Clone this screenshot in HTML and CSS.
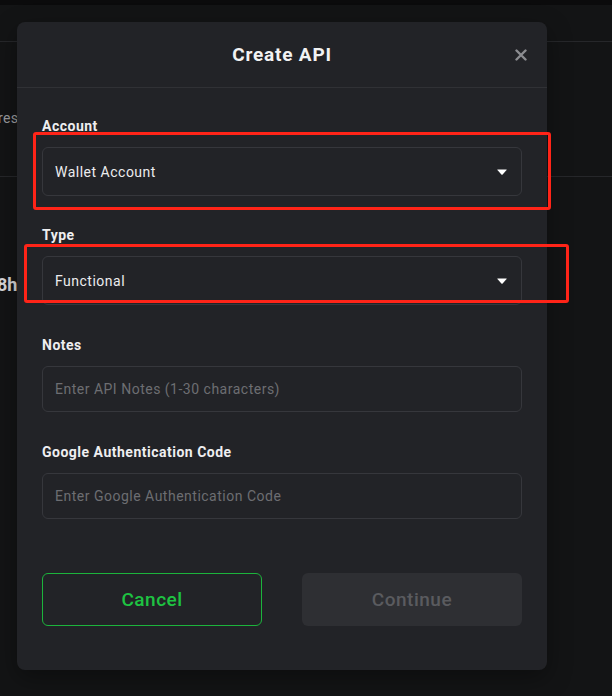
FILE: index.html
```html
<!DOCTYPE html>
<html>
<head>
<meta charset="utf-8">
<link rel="stylesheet" href="styles.css">
</head>
<body>
<div class="page">
  <div class="topstrip"></div>
  <div class="pagebar"></div>
  <div class="section">
    <div class="bg-text">res</div>
  </div>
  <div class="section2">
    <div class="bg-big">8h</div>
  </div>
</div>

<div class="modal">
  <div class="modal-head">
    <div class="title">Create API</div>
    <svg class="close" width="12" height="12" viewBox="0 0 12 12"><path d="M1.5 1.5 L10.5 10.5 M10.5 1.5 L1.5 10.5" stroke="#8b8c90" stroke-width="2.4" stroke-linecap="round"/></svg>
  </div>
  <div class="modal-body">
    <div class="field">
      <div class="label">Account</div>
      <div class="box select"><span class="value">Wallet Account</span><svg class="caret" width="10" height="6" viewBox="0 0 10 6"><path d="M0.6 0.5 H9.4 Q10 0.5 9.6 1.1 L5.6 5.5 Q5 6 4.4 5.5 L0.4 1.1 Q0 0.5 0.6 0.5Z" fill="#fff"/></svg></div>
    </div>
    <div class="field">
      <div class="label">Type</div>
      <div class="box select"><span class="value">Functional</span><svg class="caret" width="10" height="6" viewBox="0 0 10 6"><path d="M0.6 0.5 H9.4 Q10 0.5 9.6 1.1 L5.6 5.5 Q5 6 4.4 5.5 L0.4 1.1 Q0 0.5 0.6 0.5Z" fill="#fff"/></svg></div>
    </div>
    <div class="field">
      <div class="label">Notes</div>
      <div class="box input"><span class="placeholder">Enter API Notes (1-30 characters)</span></div>
    </div>
    <div class="field">
      <div class="label">Google Authentication Code</div>
      <div class="box input"><span class="placeholder">Enter Google Authentication Code</span></div>
    </div>
    <div class="actions">
      <div class="btn btn-cancel">Cancel</div>
      <div class="btn btn-continue">Continue</div>
    </div>
  </div>
</div>

<div class="mark mark-1"></div>
<div class="mark mark-2"></div>
</body>
</html>
```

FILE: styles.css
```css
* { box-sizing: border-box; }
html, body {
  margin: 0;
  padding: 0;
}
body {
  width: 612px;
  height: 696px;
  overflow: hidden;
  background: #131415;
  font-family: Roboto, "Liberation Sans", sans-serif;
  position: relative;
}
.page { width: 612px; }
.topstrip { height: 5px; background: #0b0b0c; }
.pagebar { height: 37px; border-bottom: 1px solid #26272a; }
.section {
  height: 135px;
  border-bottom: 1px solid #26272a;
  padding-top: 66px;
}
.bg-text {
  font-size: 14px;
  line-height: 20px;
  color: #9a9b9e;
  letter-spacing: 0.4px;
  margin-left: -2px;
}
.section2 { padding-top: 97px; }
.bg-big {
  font-size: 18px;
  font-weight: 700;
  line-height: 22px;
  color: #d8d8da;
  margin-left: -3px;
}

.modal {
  position: absolute;
  left: 17px;
  top: 22px;
  width: 530px;
  height: 648px;
  background: #222327;
  border-radius: 8px;
  box-shadow: 0 8px 24px rgba(0,0,0,0.35);
}
.modal-head {
  height: 66px;
  border-bottom: 1px solid #303135;
  display: flex;
  align-items: center;
  justify-content: center;
  position: relative;
}
.title {
  color: #f2f2f3;
  font-size: 19px;
  font-weight: 700;
  line-height: 24px;
  letter-spacing: 0.8px;
  margin-top: 1px;
}
.close {
  position: absolute;
  right: 20px;
  top: 27px;
}
.modal-body {
  padding: 28px 25px 0 25px;
  display: flex;
  flex-direction: column;
}
.field {
  display: flex;
  flex-direction: column;
  margin-bottom: 30px;
}
.field:nth-child(1) { margin-bottom: 29px; }
.field:nth-child(4) { margin-bottom: 0; }
.label {
  color: #eeeef0;
  font-size: 14px;
  font-weight: 700;
  line-height: 20px;
  letter-spacing: 0.5px;
  margin-bottom: 11px;
}
.box {
  border: 1px solid #36373c;
  border-radius: 6px;
  display: flex;
  align-items: center;
  padding: 0 14px 0 12px;
  font-size: 14px;
  letter-spacing: 0.5px;
}
.select { height: 49px; justify-content: space-between; }
.input { height: 46px; }
.value { color: #ececee; }
.placeholder { color: #6d6e72; }
.caret { display: block; margin-top: 1px; }

.actions {
  display: flex;
  justify-content: space-between;
  margin-top: 54px;
}
.btn {
  width: 220px;
  height: 53px;
  border-radius: 6px;
  display: flex;
  align-items: center;
  justify-content: center;
  font-size: 19px;
  font-weight: 500;
  letter-spacing: 0.5px;
}
.btn-cancel {
  border: 1px solid #1cb43c;
  color: #1ec342;
}
.btn-continue {
  background: #2e2f33;
  color: #5a5b5f;
}

.mark {
  position: absolute;
  border: 3px solid #ff2418;
  border-radius: 3px;
}
.mark-1 { left: 33px; top: 132px; width: 518px; height: 78px; }
.mark-2 { left: 24px; top: 244px; width: 545px; height: 59px; }
```
